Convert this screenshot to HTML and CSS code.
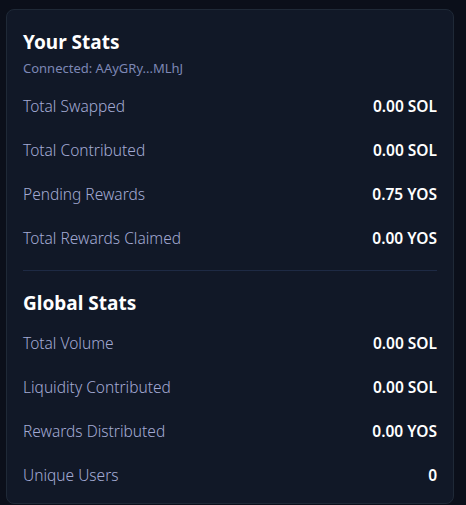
FILE: index.html
```html
<!DOCTYPE html>
<html>
<head>
<meta charset="utf-8">
<link rel="stylesheet" href="styles.css">
</head>
<body>
<div class="card">
  <h2 class="title">Your Stats</h2>
  <div class="sub">Connected: AAyGRy...MLhJ</div>
  <div class="rows">
    <div class="row"><span class="label">Total Swapped</span><span class="value">0.00 SOL</span></div>
    <div class="row"><span class="label">Total Contributed</span><span class="value">0.00 SOL</span></div>
    <div class="row"><span class="label">Pending Rewards</span><span class="value">0.75 YOS</span></div>
    <div class="row"><span class="label">Total Rewards Claimed</span><span class="value">0.00 YOS</span></div>
  </div>
  <div class="sep"></div>
  <h2 class="title">Global Stats</h2>
  <div class="rows global">
    <div class="row"><span class="label">Total Volume</span><span class="value">0.00 SOL</span></div>
    <div class="row"><span class="label">Liquidity Contributed</span><span class="value">0.00 SOL</span></div>
    <div class="row"><span class="label">Rewards Distributed</span><span class="value">0.00 YOS</span></div>
    <div class="row"><span class="label">Unique Users</span><span class="value">0</span></div>
  </div>
</div>
</body>
</html>
```

FILE: styles.css
```css
html, body {
  margin: 0;
  padding: 0;
  background: #0b0f1a;
}
body {
  padding: 9px 12px 0 6px;
  font-family: "Noto Sans", "Open Sans", sans-serif;
}
.card {
  background: #111827;
  border: 1px solid #1f2937;
  border-radius: 8px;
  padding: 16px 16px 6px 16px;
}
.title {
  margin: 0;
  font-size: 19px;
  line-height: 32px;
  font-weight: 700;
  color: #ffffff;
}
.sub {
  font-size: 13px;
  line-height: 16px;
  color: #7d87b5;
  font-weight: 400;
  margin-top: 2px;
}
.rows {
  display: flex;
  flex-direction: column;
  margin-top: 8px;
}
.rows.global {
  margin-top: 2px;
}
.row {
  display: flex;
  justify-content: space-between;
  align-items: center;
  padding: 12px 0;
  line-height: 20px;
  font-size: 15.5px;
}
.label {
  color: #a3aad4;
  font-weight: 300;
}
.value {
  color: #ffffff;
  font-weight: 600;
}
.sep {
  height: 1px;
  background: #1e2a44;
  margin: 10px 0 16px;
}
```
